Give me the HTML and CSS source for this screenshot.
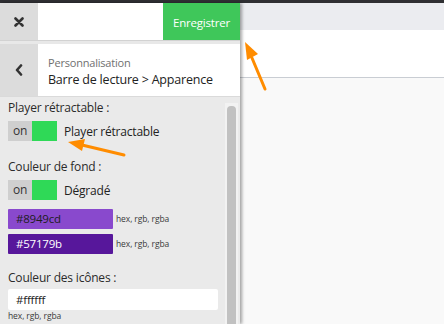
FILE: index.html
```html
<!DOCTYPE html>
<html lang="fr">
<head>
    <meta charset="UTF-8">
    <title>Personnalisation</title>
    <link rel="stylesheet" href="styles.css">
</head>
<body>
    <div class="topbar"></div>
    <div class="layout">
        <!-- Side panel -->
        <aside class="panel">
            <div class="panel-header">
                <button class="icon-btn" aria-label="Fermer">
                    <svg width="10" height="10" viewBox="0 0 10 10"><path d="M1.5 1.5 L8.5 8.5 M8.5 1.5 L1.5 8.5" stroke="#333" stroke-width="2.6" stroke-linecap="round"/></svg>
                </button>
                <div class="header-fill"></div>
                <button class="btn-save">Enregistrer</button>
            </div>
            <div class="panel-sep"></div>
            <div class="breadcrumb">
                <button class="icon-btn" aria-label="Retour">
                    <svg width="8" height="12" viewBox="0 0 8 12"><path d="M6 1.5 L2 6 L6 10.5" fill="none" stroke="#333" stroke-width="2.6" stroke-linecap="round" stroke-linejoin="round"/></svg>
                </button>
                <div class="crumb-text">
                    <div class="crumb-parent">Personnalisation</div>
                    <div class="crumb-title">Barre de lecture &gt; Apparence</div>
                </div>
            </div>
            <div class="panel-body">
                <div class="panel-content">
                    <div class="field">
                        <div class="field-label">Player rétractable :</div>
                        <div class="toggle-row">
                            <span class="toggle"><span class="toggle-on">on</span><span class="toggle-knob"></span></span>
                            <span class="toggle-text">Player rétractable</span>
                        </div>
                    </div>
                    <div class="field field-colors">
                        <div class="field-label">Couleur de fond :</div>
                        <div class="toggle-row">
                            <span class="toggle"><span class="toggle-on">on</span><span class="toggle-knob"></span></span>
                            <span class="toggle-text">Dégradé</span>
                        </div>
                        <div class="color-row">
                            <span class="color-input color-light">#8949cd</span>
                            <span class="hint">hex, rgb, rgba</span>
                        </div>
                        <div class="color-row">
                            <span class="color-input color-dark">#57179b</span>
                            <span class="hint">hex, rgb, rgba</span>
                        </div>
                    </div>
                    <div class="field">
                        <div class="field-label">Couleur des icônes :</div>
                        <div class="text-input">#ffffff</div>
                        <div class="hint">hex, rgb, rgba</div>
                    </div>
                </div>
                <div class="scrollbar"><div class="scroll-thumb"></div></div>
            </div>
        </aside>

        <!-- Preview area -->
        <main class="preview">
            <div class="preview-top"></div>
            <div class="preview-bar"></div>
        </main>
    </div>

    <!-- Annotation arrows -->
    <svg class="arrow arrow-save" width="30" height="56" viewBox="0 0 30 56">
        <path d="M22 50 L9 19" stroke="#ff8c00" stroke-width="3" stroke-linecap="round"/>
        <path d="M2 3 L15 15 L4 21 Z" fill="#ff8c00"/>
    </svg>
    <svg class="arrow arrow-toggle" width="62" height="22" viewBox="0 0 62 22">
        <path d="M58 17 L16 7" stroke="#ff8c00" stroke-width="3" stroke-linecap="round"/>
        <path d="M2 4 L19 1 L16 13 Z" fill="#ff8c00"/>
    </svg>
</body>
</html>
```

FILE: styles.css
```css
* {
    margin: 0;
    padding: 0;
    box-sizing: border-box;
}

body {
    font-family: 'Open Sans', 'Noto Sans', sans-serif;
    color: #333;
    background-color: #f9f9f9;
    width: 444px;
    height: 324px;
    overflow: hidden;
    position: relative;
}

button {
    font-family: inherit;
    border: none;
    cursor: pointer;
}

.topbar {
    height: 3px;
    background-color: #2f2f33;
}

.layout {
    display: flex;
    height: 321px;
}

/* Side panel */
.panel {
    width: 240px;
    display: flex;
    flex-direction: column;
    background-color: #eaeaea;
    box-shadow: 2px 0 3px rgba(0, 0, 0, 0.35);
    position: relative;
    z-index: 1;
}

.panel-header {
    display: flex;
    height: 37px;
    background-color: #fff;
}

.icon-btn {
    width: 38px;
    background-color: #dcdcdc;
    display: flex;
    align-items: center;
    justify-content: center;
}

.header-fill {
    flex: 1;
}

.btn-save {
    width: 77px;
    background-color: #3fc75a;
    color: #fff;
    font-size: 11.5px;
    font-weight: 500;
    letter-spacing: -0.2px;
    padding-top: 1px;
}

.panel-sep {
    height: 4px;
    background-color: #e8e8e8;
    border-top: 1px solid #d2d2d2;
}

.breadcrumb {
    display: flex;
    height: 53px;
    background-color: #fff;
    border-bottom: 1px solid #dadada;
}

.crumb-text {
    padding: 3px 0 0 10px;
    display: flex;
    flex-direction: column;
    justify-content: center;
}

.crumb-parent {
    font-size: 11px;
    letter-spacing: -0.2px;
    color: #707070;
    line-height: 15px;
}

.crumb-title {
    font-size: 12.5px;
    letter-spacing: -0.2px;
    color: #222;
    line-height: 19px;
}

/* Panel body */
.panel-body {
    flex: 1;
    display: flex;
    overflow: hidden;
}

.panel-content {
    flex: 1;
    padding: 2px 0 0 8px;
    letter-spacing: -0.2px;
}

.field {
    margin-bottom: 17px;
}

.field-colors {
    margin-bottom: 15px;
}

.field-label {
    font-size: 12px;
    line-height: 17px;
    color: #2b2b2b;
    margin-bottom: 5px;
}

.toggle-row {
    display: flex;
    align-items: center;
}

.toggle-row + .color-row {
    margin-top: 9px;
}

.toggle {
    display: flex;
    width: 49px;
    height: 20px;
}

.toggle-on {
    width: 24px;
    background-color: #cfcfcf;
    font-size: 12px;
    line-height: 20px;
    text-align: center;
    color: #333;
}

.toggle-knob {
    flex: 1;
    background-color: #2fd957;
}

.toggle-text {
    font-size: 12px;
    margin-left: 7px;
    color: #222;
}

.color-row {
    display: flex;
    align-items: center;
    margin-bottom: 5px;
}

.color-row:last-child {
    margin-bottom: 0;
}

.color-input {
    width: 105px;
    height: 20px;
    padding-left: 8px;
    font-size: 11.5px;
    line-height: 20px;
    border-radius: 1px;
}

.color-light {
    background-color: #8949cd;
    color: #1d1d1d;
}

.color-dark {
    background-color: #57179b;
    color: #fff;
}

.hint {
    font-size: 8.5px;
    letter-spacing: -0.1px;
    color: #3a3a3a;
    margin-left: 3px;
    line-height: 12px;
}

.text-input {
    width: 210px;
    height: 21px;
    margin-top: -2px;
    background-color: #fff;
    border-radius: 2px;
    padding-left: 8px;
    font-size: 11.5px;
    line-height: 21px;
    color: #222;
}

.text-input + .hint {
    margin-left: 0;
}

.scrollbar {
    width: 13px;
    margin: 6px 2px 0 0;
    background-color: #f2f2f2;
    padding: 3px 2px 0;
}

.scroll-thumb {
    height: 100%;
    background-color: #c1c1c1;
    border-radius: 4px 4px 0 0;
}

/* Preview */
.preview {
    flex: 1;
}

.preview-top {
    height: 27px;
    background-color: #ebecf0;
}

.preview-bar {
    height: 48px;
    background-color: #fff;
    border-bottom: 1px solid #c9cdd3;
}

/* Annotation arrows */
.arrow {
    position: absolute;
    z-index: 2;
}

.arrow-save {
    left: 243px;
    top: 39px;
}

.arrow-toggle {
    left: 66px;
    top: 138px;
}
```
